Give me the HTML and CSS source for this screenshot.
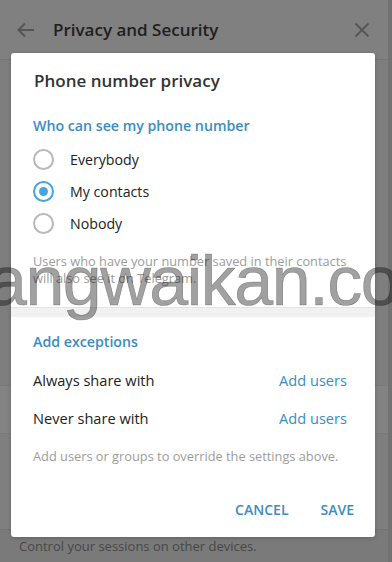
FILE: index.html
```html
<!DOCTYPE html>
<html lang="en">
<head>
<meta charset="UTF-8">
<title>Phone number privacy</title>
<link rel="stylesheet" href="styles.css">
</head>
<body>
<div class="screen">
  <div class="page">
    <div class="page-header">
      <svg class="hdr-icon" width="20" height="20" viewBox="0 0 20 20"><path d="M18 10H3M9 3.5L2.5 10 9 16.5" fill="none" stroke="#555" stroke-width="2"/></svg>
      <div class="page-title">Privacy and Security</div>
      <svg class="hdr-close" width="16" height="16" viewBox="0 0 16 16"><path d="M1.5 1.5l13 13M14.5 1.5l-13 13" fill="none" stroke="#555" stroke-width="1.8"/></svg>
    </div>
    <div class="page-block tall"></div>
    <div class="page-block band"></div>
    <div class="page-block mid"></div>
    <div class="page-note">Control your sessions on other devices.</div>
  </div>
  <div class="scroll-edge"></div>

  <div class="dialog">
    <div class="dlg-title">Phone number privacy</div>
    <div class="sec-head">Who can see my phone number</div>
    <div class="radios">
      <div class="radio-row"><span class="radio"></span>Everybody</div>
      <div class="radio-row"><span class="radio checked"></span>My contacts</div>
      <div class="radio-row"><span class="radio"></span>Nobody</div>
    </div>
    <div class="about">Users who have your number saved in their contacts<br>will also see it on Telegram.</div>
    <div class="divider"></div>
    <div class="sec-head exc">Add exceptions</div>
    <div class="exc-row"><span>Always share with</span><span class="link">Add users</span></div>
    <div class="exc-row"><span>Never share with</span><span class="link">Add users</span></div>
    <div class="about small">Add users or groups to override the settings above.</div>
    <div class="buttons">
      <span class="btn">CANCEL</span>
      <span class="btn">SAVE</span>
    </div>
  </div>

  <div class="watermark">angwaikan.co</div>
</div>
</body>
</html>
```

FILE: styles.css
```css
body {
  margin: 0;
  font-family: 'Open Sans', 'Noto Sans', sans-serif;
  background: #7f7f7f;
}
.screen {
  position: relative;
  width: 392px;
  height: 562px;
  overflow: hidden;
  display: flex;
}
.page {
  flex: 1;
  display: flex;
  flex-direction: column;
  background: #808080;
}
.scroll-edge {
  width: 4px;
  background: #727272;
}
.page-header {
  height: 60px;
  display: flex;
  align-items: center;
  padding: 0 18px 0 16px;
  border-bottom: 1px solid #767676;
  box-sizing: border-box;
}
.hdr-icon {
  margin-right: 17px;
}
.page-title {
  flex: 1;
  font-size: 17px;
  font-weight: 600;
  color: #1e1e1e;
}
.page-block.tall {
  height: 325px;
  background: #7e7e7e;
}
.page-block.band {
  height: 47px;
  background: #838383;
  border-top: 1px solid #7a7a7a;
}
.page-block.mid {
  height: 95px;
  background: #7f7f7f;
  border-top: 1px solid #7a7a7a;
}
.page-note {
  flex: 1;
  background: #7a7a7a;
  border-top: 1px solid #747474;
  padding: 7px 19px 0;
  font-size: 13px;
  color: #474747;
}

.dialog {
  position: absolute;
  left: 11px;
  top: 53px;
  width: 364px;
  height: 484px;
  background: #fff;
  border-radius: 3px;
  box-shadow: 0 1px 4px rgba(0, 0, 0, 0.2);
  display: flex;
  flex-direction: column;
}
.dlg-title {
  padding: 16px 23px 0;
  font-size: 17px;
  line-height: 24px;
  font-weight: 600;
  color: #333;
}
.sec-head {
  margin-top: 23px;
  padding: 0 22px;
  font-size: 14.2px;
  line-height: 20px;
  font-weight: 600;
  color: #3a8dc4;
}
.radios {
  margin-top: 7px;
  display: flex;
  flex-direction: column;
}
.radio-row {
  height: 32px;
  display: flex;
  align-items: center;
  padding: 0 22px;
  font-size: 14.2px;
  color: #222;
}
.radio {
  width: 17px;
  height: 17px;
  border: 2px solid #b8b8b8;
  border-radius: 50%;
  margin-right: 16px;
  position: relative;
}
.radio.checked {
  border-color: #48a4de;
}
.radio.checked::after {
  content: '';
  position: absolute;
  left: 4px;
  top: 4px;
  width: 9px;
  height: 9px;
  border-radius: 50%;
  background: #48a4de;
}
.about {
  margin-top: 14px;
  padding: 0 22px;
  font-size: 12.8px;
  line-height: 17px;
  color: #9c9c9c;
}
.divider {
  margin-top: 20px;
  height: 10px;
  background: #f1f1f1;
  border-top: 1px solid #e4e4e4;
  box-sizing: border-box;
}
.sec-head.exc {
  margin-top: 15px;
}
.exc-row {
  height: 38px;
  display: flex;
  align-items: center;
  justify-content: space-between;
  padding: 0 28px 0 22px;
  font-size: 14.6px;
  color: #222;
}
.sec-head.exc + .exc-row {
  margin-top: 9px;
}
.link {
  color: #3a8dc4;
}
.about.small {
  margin-top: 11px;
}
.buttons {
  margin-top: 27px;
  display: flex;
  justify-content: flex-end;
  gap: 32px;
  padding: 0 21px;
}
.btn {
  height: 36px;
  line-height: 36px;
  font-size: 14px;
  font-weight: 600;
  color: #3a8dc4;
}

.watermark {
  position: absolute;
  left: -12px;
  top: 246px;
  font-family: 'Liberation Sans', Arial, sans-serif;
  font-size: 70px;
  line-height: 1;
  letter-spacing: -1.5px;
  white-space: nowrap;
  color: rgba(0, 0, 0, 0.37);
  -webkit-text-stroke: 0.6px rgba(0, 0, 0, 0.37);
  pointer-events: none;
}
```
